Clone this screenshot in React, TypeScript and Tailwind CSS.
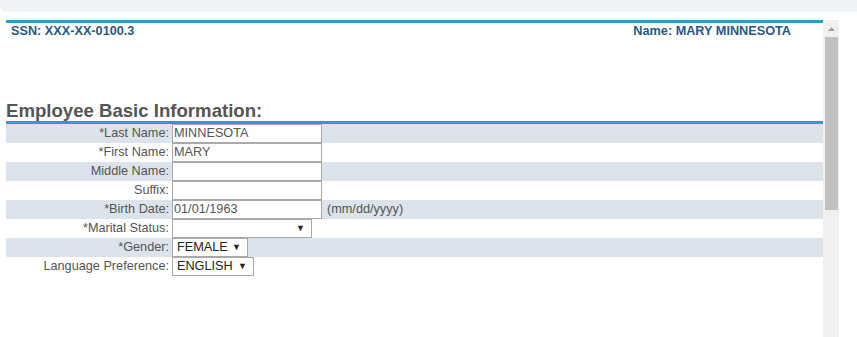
import React from "react";

type Row = {
  label: string;
  kind: "input" | "select";
  value?: string;
  width: string;
  note?: string;
};

const rows: Row[] = [
  { label: "*Last Name:", kind: "input", value: "MINNESOTA", width: "w-[150px]" },
  { label: "*First Name:", kind: "input", value: "MARY", width: "w-[150px]" },
  { label: "Middle Name:", kind: "input", value: "", width: "w-[150px]" },
  { label: "Suffix:", kind: "input", value: "", width: "w-[150px]" },
  { label: "*Birth Date:", kind: "input", value: "01/01/1963", width: "w-[150px]", note: "(mm/dd/yyyy)" },
  { label: "*Marital Status:", kind: "select", value: "", width: "w-[140px]" },
  { label: "*Gender:", kind: "select", value: "FEMALE", width: "w-[76px]" },
  { label: "Language Preference:", kind: "select", value: "ENGLISH", width: "w-[82px]" },
];

export default function App() {
  return (
    <div className="w-[857px] h-[337px] bg-white overflow-hidden font-['Liberation_Sans',Arial,sans-serif] text-[12.7px] text-[#555]">
      {/* top strip */}
      <div className="h-[12px] bg-[#f1f4f7] rounded-bl-[6px]" />

      <div className="flex pt-[8px] pl-[6px]">
        {/* panel */}
        <div className="w-[817px] border-t-[3px] border-[#3399cc]">
          <div className="flex justify-between pl-[5px] pr-[32px] pt-[1px] font-bold text-[#2b5a7e] leading-[14px]">
            <span>SSN: XXX-XX-0100.3</span>
            <span>Name: MARY MINNESOTA</span>
          </div>

          <h2 className="mt-[63px] text-[18.6px] leading-[19px] font-bold text-[#555]">
            Employee Basic Information:
          </h2>

          <div className="mt-[1px] border-t-[3px] border-[#3399cc]">
            {rows.map((row, idx) => (
              <div
                key={row.label}
                className={`flex items-center h-[19px] ${idx % 2 === 0 ? "bg-[#dce3ea]" : "bg-white"}`}
              >
                <div className="w-[166px] pr-[3px] text-right leading-[19px]">{row.label}</div>
                {row.kind === "input" ? (
                  <div
                    className={`${row.width} h-[19px] bg-white border border-[#a9a9a9] px-[1px] leading-[17px] text-[#555]`}
                  >
                    {row.value}
                  </div>
                ) : (
                  <div
                    className={`${row.width} h-[19px] bg-white border border-[#a9a9a9] pl-[4px] pr-[6px] flex items-center justify-between leading-[17px] text-[#222]`}
                  >
                    <span>{row.value}</span>
                    <span className="text-[9px]">▼</span>
                  </div>
                )}
                {row.note && <span className="ml-[5px] leading-[19px]">{row.note}</span>}
              </div>
            ))}
          </div>
        </div>

        {/* scrollbar */}
        <div className="w-[16px] h-[317px] bg-[#f0f0f0] flex flex-col items-center">
          <div className="h-[17px] flex items-center justify-center">
            <svg width="7" height="4" viewBox="0 0 7 4">
              <path d="M0 4 L3.5 0 L7 4 Z" fill="#a3a3a3" />
            </svg>
          </div>
          <div className="w-[13px] h-[173px] bg-[#c1c1c1]" />
        </div>
      </div>
    </div>
  );
}
